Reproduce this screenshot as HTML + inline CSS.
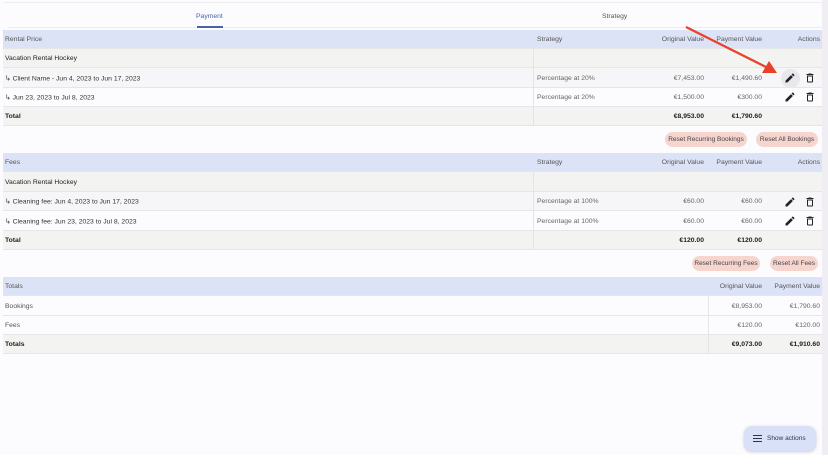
<!DOCTYPE html>
<html><head><style>
*{margin:0;padding:0;box-sizing:border-box}
body{width:828px;height:466px;background:#fff;font-family:"Liberation Sans",sans-serif;font-size:6.8px;color:#333;position:relative;overflow:hidden}
.page{position:absolute;left:0;top:0;width:822px;height:455px;background:#fcfbfe}
.edge{position:absolute;left:822px;top:0;width:6px;height:455px;background:#f0eef3}
.r{position:absolute;left:3px;width:819px;border-bottom:1px solid #e6e6ea}
.hd{background:#dde3f6;color:#555}
.g{background:#f3f3f1}
.w{background:#fcfbfe}
.c{position:absolute;top:50%;transform:translateY(-45%);white-space:nowrap}
.b{font-weight:bold;color:#222}
.s{color:#666}
.vl{position:absolute;top:0;bottom:0;width:1px;background:#e4e4e8}
.btn{position:absolute;height:15px;border-radius:8px;background:#f6d5cf;color:#444;font-size:6.5px;line-height:15px;text-align:center}
.ic{position:absolute}
</style></head><body>
<div class="page"></div><div class="edge"></div>
<div style="position:absolute;left:3px;top:2px;width:819px;height:1px;background:#eee"></div>
<div style="position:absolute;left:8px;top:27px;width:814px;height:1px;background:#ececf0"></div>
<div style="position:absolute;left:196px;top:13px;color:#4a62a8">Payment</div>
<div style="position:absolute;left:197px;top:26px;width:26px;height:2px;background:#4a62a8"></div>
<div style="position:absolute;left:602px;top:13px;color:#555">Strategy</div>

<div class="r hd" style="top:30px;height:19px"><span class="c" style="left:2px">Rental Price</span><span class="c" style="left:534px">Strategy</span><span class="c" style="right:118px">Original Value</span><span class="c" style="right:60px">Payment Value</span><span class="c" style="right:2px">Actions</span></div>
<div class="r g" style="top:49px;height:19px"><span class="c" style="left:2px;color:#222">Vacation Rental Hockey</span><div class="vl" style="left:530px"></div></div>
<div class="r" style="top:68px;height:20px;background:#f6f6f8"><span class="c" style="left:2px">↳ Client Name - Jun 4, 2023 to Jun 17, 2023</span><div class="vl" style="left:530px"></div><span class="c s" style="left:534px">Percentage at 20%</span><span class="c s" style="right:118px">€7,453.00</span><span class="c s" style="right:60px">€1,490.60</span></div>
<div class="r w" style="top:88px;height:19px"><span class="c" style="left:2px">↳ Jun 23, 2023 to Jul 8, 2023</span><div class="vl" style="left:530px"></div><span class="c s" style="left:534px">Percentage at 20%</span><span class="c s" style="right:118px">€1,500.00</span><span class="c s" style="right:60px">€300.00</span></div>
<div class="r g" style="top:107px;height:19px"><span class="c b" style="left:2px">Total</span><div class="vl" style="left:530px"></div><span class="c b" style="right:118px">€8,953.00</span><span class="c b" style="right:60px">€1,790.60</span></div>
<div class="btn" style="left:665px;top:132px;width:82px">Reset Recurring Bookings</div>
<div class="btn" style="left:756px;top:132px;width:62px">Reset All Bookings</div>

<div class="r hd" style="top:153px;height:19px"><span class="c" style="left:2px">Fees</span><span class="c" style="left:534px">Strategy</span><span class="c" style="right:118px">Original Value</span><span class="c" style="right:60px">Payment Value</span><span class="c" style="right:2px">Actions</span></div>
<div class="r g" style="top:172px;height:20px"><span class="c" style="left:2px;color:#222">Vacation Rental Hockey</span><div class="vl" style="left:530px"></div></div>
<div class="r" style="top:192px;height:19px;background:#f6f6f8"><span class="c" style="left:2px">↳ Cleaning fee: Jun 4, 2023 to Jun 17, 2023</span><div class="vl" style="left:530px"></div><span class="c s" style="left:534px">Percentage at 100%</span><span class="c s" style="right:118px">€60.00</span><span class="c s" style="right:60px">€60.00</span></div>
<div class="r w" style="top:211px;height:20px"><span class="c" style="left:2px">↳ Cleaning fee: Jun 23, 2023 to Jul 8, 2023</span><div class="vl" style="left:530px"></div><span class="c s" style="left:534px">Percentage at 100%</span><span class="c s" style="right:118px">€60.00</span><span class="c s" style="right:60px">€60.00</span></div>
<div class="r g" style="top:231px;height:19px"><span class="c b" style="left:2px">Total</span><div class="vl" style="left:530px"></div><span class="c b" style="right:118px">€120.00</span><span class="c b" style="right:60px">€120.00</span></div>
<div class="btn" style="left:692px;top:256px;width:68px">Reset Recurring Fees</div>
<div class="btn" style="left:770px;top:256px;width:48px">Reset All Fees</div>

<div class="r hd" style="top:277px;height:19px"><span class="c" style="left:2px">Totals</span><span class="c" style="right:60px">Original Value</span><span class="c" style="right:2px">Payment Value</span></div>
<div class="r w" style="top:296px;height:20px"><span class="c" style="left:2px;color:#555">Bookings</span><div class="vl" style="left:705px"></div><span class="c s" style="right:60px">€8,953.00</span><span class="c s" style="right:2px">€1,790.60</span></div>
<div class="r w" style="top:316px;height:19px"><span class="c" style="left:2px;color:#555">Fees</span><div class="vl" style="left:705px"></div><span class="c s" style="right:60px">€120.00</span><span class="c s" style="right:2px">€120.00</span></div>
<div class="r g" style="top:335px;height:19px"><span class="c b" style="left:2px">Totals</span><div class="vl" style="left:705px"></div><span class="c b" style="right:60px">€9,073.00</span><span class="c b" style="right:2px">€1,910.60</span></div>

<div style="position:absolute;left:781px;top:69px;width:19px;height:19px;border-radius:50%;background:#e8e8ec"></div>
<svg class="ic" style="left:784px;top:72px" width="12" height="12" viewBox="0 0 24 24"><path d="M3 17.25V21h3.75L17.8 9.94l-3.75-3.75L3 17.25zM20.7 7.04a1 1 0 0 0 0-1.41l-2.34-2.34a1 1 0 0 0-1.41 0l-1.83 1.83 3.75 3.75 1.83-1.83z" fill="#222"/></svg>
<svg class="ic" style="left:784px;top:91px" width="12" height="12" viewBox="0 0 24 24"><path d="M3 17.25V21h3.75L17.8 9.94l-3.75-3.75L3 17.25zM20.7 7.04a1 1 0 0 0 0-1.41l-2.34-2.34a1 1 0 0 0-1.41 0l-1.83 1.83 3.75 3.75 1.83-1.83z" fill="#222"/></svg>
<svg class="ic" style="left:784px;top:196px" width="12" height="12" viewBox="0 0 24 24"><path d="M3 17.25V21h3.75L17.8 9.94l-3.75-3.75L3 17.25zM20.7 7.04a1 1 0 0 0 0-1.41l-2.34-2.34a1 1 0 0 0-1.41 0l-1.83 1.83 3.75 3.75 1.83-1.83z" fill="#222"/></svg>
<svg class="ic" style="left:784px;top:215px" width="12" height="12" viewBox="0 0 24 24"><path d="M3 17.25V21h3.75L17.8 9.94l-3.75-3.75L3 17.25zM20.7 7.04a1 1 0 0 0 0-1.41l-2.34-2.34a1 1 0 0 0-1.41 0l-1.83 1.83 3.75 3.75 1.83-1.83z" fill="#222"/></svg>
<svg class="ic" style="left:804px;top:72px" width="12" height="12" viewBox="0 0 24 24"><path d="M6 19a2 2 0 0 0 2 2h8a2 2 0 0 0 2-2V7H6v12zM8 9h8v10H8V9zm7.5-5-1-1h-5l-1 1H5v2h14V4z" fill="#222"/></svg>
<svg class="ic" style="left:804px;top:91px" width="12" height="12" viewBox="0 0 24 24"><path d="M6 19a2 2 0 0 0 2 2h8a2 2 0 0 0 2-2V7H6v12zM8 9h8v10H8V9zm7.5-5-1-1h-5l-1 1H5v2h14V4z" fill="#222"/></svg>
<svg class="ic" style="left:804px;top:196px" width="12" height="12" viewBox="0 0 24 24"><path d="M6 19a2 2 0 0 0 2 2h8a2 2 0 0 0 2-2V7H6v12zM8 9h8v10H8V9zm7.5-5-1-1h-5l-1 1H5v2h14V4z" fill="#222"/></svg>
<svg class="ic" style="left:804px;top:215px" width="12" height="12" viewBox="0 0 24 24"><path d="M6 19a2 2 0 0 0 2 2h8a2 2 0 0 0 2-2V7H6v12zM8 9h8v10H8V9zm7.5-5-1-1h-5l-1 1H5v2h14V4z" fill="#222"/></svg>

<svg class="ic" style="left:680px;top:22px" width="100" height="56" viewBox="0 0 100 56"><line x1="6" y1="5" x2="88" y2="46" stroke="#e8412a" stroke-width="2.2"/><path d="M97 51 L82 51 L89 39 Z" fill="#e8412a"/></svg>

<div style="position:absolute;left:744px;top:426px;width:72px;height:25px;border-radius:8px;background:#d9e1f9;box-shadow:0 1px 3px rgba(0,0,0,.2)"></div>
<div style="position:absolute;left:753px;top:435px;width:9px;height:1.3px;background:#334;box-shadow:0 3px 0 #334,0 6px 0 #334"></div>
<div style="position:absolute;left:767px;top:435px;font-size:6.5px;color:#334">Show actions</div>
</body></html>
